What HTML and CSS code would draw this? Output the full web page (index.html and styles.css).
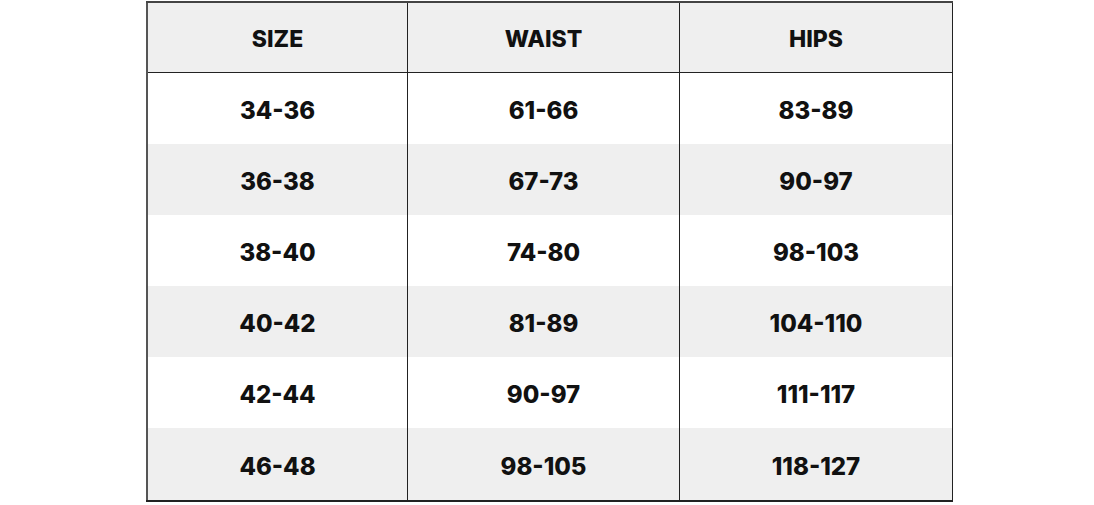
FILE: index.html
```html
<!DOCTYPE html>
<html>
<head>
<meta charset="utf-8">
<link rel="stylesheet" href="styles.css">
</head>
<body>
<div class="page">
  <table class="chart">
    <thead>
      <tr><th class="c1">SIZE</th><th class="c2">WAIST</th><th class="c3">HIPS</th></tr>
    </thead>
    <tbody>
      <tr><td>34-36</td><td>61-66</td><td>83-89</td></tr>
      <tr><td>36-38</td><td>67-73</td><td>90-97</td></tr>
      <tr><td>38-40</td><td>74-80</td><td>98-103</td></tr>
      <tr><td>40-42</td><td>81-89</td><td>104-110</td></tr>
      <tr><td>42-44</td><td>90-97</td><td>111-117</td></tr>
      <tr><td>46-48</td><td>98-105</td><td>118-127</td></tr>
    </tbody>
  </table>
</div>
</body>
</html>
```

FILE: styles.css
```css
html, body {
  margin: 0;
  padding: 0;
  background: #ffffff;
}
.page {
  width: 1094px;
  height: 505px;
  padding: 1px 0 0 146px;
  box-sizing: border-box;
}
.chart {
  border-collapse: collapse;
  table-layout: fixed;
  width: 806px;
  font-family: "Inter", "Liberation Sans", sans-serif;
  color: #111;
}
.chart th, .chart td {
  text-align: center;
  vertical-align: middle;
  padding: 0;
  border-left: 1px solid #222;
  border-right: 1px solid #222;
}
.chart th {
  height: 66px;
  background: #efefef;
  font-size: 23px;
  font-weight: 800;
  border-top: 2px solid #444;
  border-bottom: 1px solid #222;
  padding-top: 3px;
}
.chart .c1 { width: 259px; }
.chart .c2 { width: 271px; }
.chart .c3 { width: 272px; }
.chart td {
  height: 67px;
  font-size: 24px;
  font-weight: 800;
  padding-top: 4px;
}
.chart tbody tr:nth-child(even) td {
  background: #efefef;
}
.chart tbody tr:last-child td {
  height: 68px;
  border-bottom: 2px solid #222;
}
.chart tr > :first-child {
  border-left: 2px solid #555;
}
```
